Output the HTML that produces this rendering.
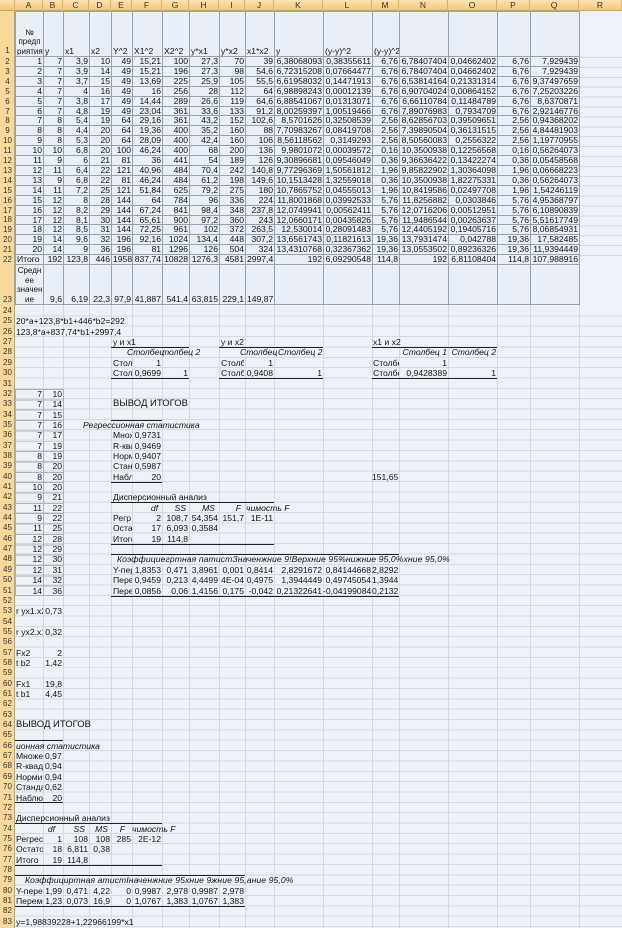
<!DOCTYPE html>
<html><head><meta charset="utf-8">
<style>
*{margin:0;padding:0;box-sizing:border-box}
body{width:622px;height:928px;overflow:hidden;background:#eef1f8;font-family:"Liberation Sans","Noto Sans CJK SC",sans-serif;font-size:8.6px;color:#111;position:relative}
.g{position:absolute;left:15px;top:306px;width:607px;height:622px;background:repeating-linear-gradient(to bottom,#eef1f8 0,#eef1f8 9.35px,#d3d9e6 9.35px,#d3d9e6 10.35px)}
.v{position:absolute;top:11px;width:1px;height:917px;background:#d3d9e6}
.rh{position:absolute;left:0;top:0;width:15px;height:928px;background:#f9d89c;border-right:1px solid #c9a25a}
.ch{position:absolute;left:0;top:0;width:622px;height:11px;background:linear-gradient(#fbe3b4,#f3c877);border-bottom:1px solid #c9a25a}
.ch span{position:absolute;top:0;line-height:11px;text-align:center;font-size:8.5px;color:#333;border-right:1px solid #d8b56f;height:11px}
.n{position:absolute;left:0;width:15px;text-align:center;font-size:8px;line-height:10px;color:#333}
table{position:absolute;left:15px;top:11px;width:564px;border-collapse:collapse;table-layout:fixed;background:#eaeef6}
td{border:1px solid #95a0b3;height:8.9px;line-height:8.9px;padding:0 1px;text-align:right;overflow:hidden;white-space:nowrap;font-size:8.6px;vertical-align:bottom}
tr.h td{height:45px;text-align:left;line-height:9.5px}
tr.m td{height:40px;line-height:9.5px}
.t,.r{position:absolute;white-space:nowrap;line-height:10px;height:10px}
.r{text-align:right}
.i{font-style:italic}
.l{position:absolute;height:1px;background:#222}
</style></head><body>
<div class="g"></div>
<div style="position:absolute;left:579px;top:57px;width:43px;height:208px;background:repeating-linear-gradient(to bottom,#d3d9e6 0,#d3d9e6 1px,#eef1f8 1px,#eef1f8 9.9px)"></div>
<div class="v" style="left:43px"></div><div class="v" style="left:63px"></div><div class="v" style="left:89px"></div><div class="v" style="left:111px"></div><div class="v" style="left:132px"></div><div class="v" style="left:162px"></div><div class="v" style="left:189px"></div><div class="v" style="left:219px"></div><div class="v" style="left:245px"></div><div class="v" style="left:274px"></div><div class="v" style="left:323px"></div><div class="v" style="left:372px"></div><div class="v" style="left:399px"></div><div class="v" style="left:448px"></div><div class="v" style="left:497px"></div><div class="v" style="left:530px"></div><div class="v" style="left:579px"></div>

<table>
<colgroup><col style="width:28px"><col style="width:20px"><col style="width:26px"><col style="width:22px"><col style="width:21px"><col style="width:30px"><col style="width:27px"><col style="width:30px"><col style="width:26px"><col style="width:29px"><col style="width:49px"><col style="width:49px"><col style="width:27px"><col style="width:49px"><col style="width:49px"><col style="width:33px"><col style="width:49px"></colgroup>
<tr class="h"><td style="text-align:center;font-size:8px;white-space:normal">№ предп риятия</td><td>y</td><td>x1</td><td>x2</td><td>Y^2</td><td>X1^2</td><td>X2^2</td><td>y*x1</td><td>y*x2</td><td>x1*x2</td><td>y</td><td>(y-y)^2</td><td>(y-y)^2</td><td></td><td></td><td></td><td></td></tr>
<tr><td>1</td><td>7</td><td>3,9</td><td>10</td><td>49</td><td>15,21</td><td>100</td><td>27,3</td><td>70</td><td>39</td><td>6,38068093</td><td>0,38355611</td><td>6,76</td><td>6,78407404</td><td>0,04662402</td><td>6,76</td><td>7,929439</td></tr>
<tr><td>2</td><td>7</td><td>3,9</td><td>14</td><td>49</td><td>15,21</td><td>196</td><td>27,3</td><td>98</td><td>54,6</td><td>6,72315208</td><td>0,07664477</td><td>6,76</td><td>6,78407404</td><td>0,04662402</td><td>6,76</td><td>7,929439</td></tr>
<tr><td>3</td><td>7</td><td>3,7</td><td>15</td><td>49</td><td>13,69</td><td>225</td><td>25,9</td><td>105</td><td>55,5</td><td>6,61958032</td><td>0,14471913</td><td>6,76</td><td>6,53814164</td><td>0,21331314</td><td>6,76</td><td>9,37497659</td></tr>
<tr><td>4</td><td>7</td><td>4</td><td>16</td><td>49</td><td>16</td><td>256</td><td>28</td><td>112</td><td>64</td><td>6,98898243</td><td>0,00012139</td><td>6,76</td><td>6,90704024</td><td>0,00864152</td><td>6,76</td><td>7,25203226</td></tr>
<tr><td>5</td><td>7</td><td>3,8</td><td>17</td><td>49</td><td>14,44</td><td>289</td><td>26,6</td><td>119</td><td>64,6</td><td>6,88541067</td><td>0,01313071</td><td>6,76</td><td>6,66110784</td><td>0,11484789</td><td>6,76</td><td>8,6370871</td></tr>
<tr><td>6</td><td>7</td><td>4,8</td><td>19</td><td>49</td><td>23,04</td><td>361</td><td>33,6</td><td>133</td><td>91,2</td><td>8,00259397</td><td>1,00519466</td><td>6,76</td><td>7,89076983</td><td>0,7934709</td><td>6,76</td><td>2,92146776</td></tr>
<tr><td>7</td><td>8</td><td>5,4</td><td>19</td><td>64</td><td>29,16</td><td>361</td><td>43,2</td><td>152</td><td>102,6</td><td>8,5701626</td><td>0,32508539</td><td>2,56</td><td>8,62856703</td><td>0,39509651</td><td>2,56</td><td>0,94368202</td></tr>
<tr><td>8</td><td>8</td><td>4,4</td><td>20</td><td>64</td><td>19,36</td><td>400</td><td>35,2</td><td>160</td><td>88</td><td>7,70983267</td><td>0,08419708</td><td>2,56</td><td>7,39890504</td><td>0,36131515</td><td>2,56</td><td>4,84481903</td></tr>
<tr><td>9</td><td>8</td><td>5,3</td><td>20</td><td>64</td><td>28,09</td><td>400</td><td>42,4</td><td>160</td><td>106</td><td>8,56118562</td><td>0,3149293</td><td>2,56</td><td>8,50560083</td><td>0,2556322</td><td>2,56</td><td>1,19770955</td></tr>
<tr><td>10</td><td>10</td><td>6,8</td><td>20</td><td>100</td><td>46,24</td><td>400</td><td>68</td><td>200</td><td>136</td><td>9,9801072</td><td>0,00039572</td><td>0,16</td><td>10,3500938</td><td>0,12256568</td><td>0,16</td><td>0,56264073</td></tr>
<tr><td>11</td><td>9</td><td>6</td><td>21</td><td>81</td><td>36</td><td>441</td><td>54</td><td>189</td><td>126</td><td>9,30896681</td><td>0,09546049</td><td>0,36</td><td>9,36636422</td><td>0,13422274</td><td>0,36</td><td>0,05458568</td></tr>
<tr><td>12</td><td>11</td><td>6,4</td><td>22</td><td>121</td><td>40,96</td><td>484</td><td>70,4</td><td>242</td><td>140,8</td><td>9,77296369</td><td>1,50561812</td><td>1,96</td><td>9,85822902</td><td>1,30364098</td><td>1,96</td><td>0,06668223</td></tr>
<tr><td>13</td><td>9</td><td>6,8</td><td>22</td><td>81</td><td>46,24</td><td>484</td><td>61,2</td><td>198</td><td>149,6</td><td>10,1513428</td><td>1,32559018</td><td>0,36</td><td>10,3500938</td><td>1,82275331</td><td>0,36</td><td>0,56264073</td></tr>
<tr><td>14</td><td>11</td><td>7,2</td><td>25</td><td>121</td><td>51,84</td><td>625</td><td>79,2</td><td>275</td><td>180</td><td>10,7865752</td><td>0,04555013</td><td>1,96</td><td>10,8419586</td><td>0,02497708</td><td>1,96</td><td>1,54246119</td></tr>
<tr><td>15</td><td>12</td><td>8</td><td>28</td><td>144</td><td>64</td><td>784</td><td>96</td><td>336</td><td>224</td><td>11,8001868</td><td>0,03992533</td><td>5,76</td><td>11,8256882</td><td>0,0303846</td><td>5,76</td><td>4,95368797</td></tr>
<tr><td>16</td><td>12</td><td>8,2</td><td>29</td><td>144</td><td>67,24</td><td>841</td><td>98,4</td><td>348</td><td>237,8</td><td>12,0749941</td><td>0,00562411</td><td>5,76</td><td>12,0716206</td><td>0,00512951</td><td>5,76</td><td>6,10890839</td></tr>
<tr><td>17</td><td>12</td><td>8,1</td><td>30</td><td>144</td><td>65,61</td><td>900</td><td>97,2</td><td>360</td><td>243</td><td>12,0660171</td><td>0,00435826</td><td>5,76</td><td>11,9486544</td><td>0,00263637</td><td>5,76</td><td>5,51617749</td></tr>
<tr><td>18</td><td>12</td><td>8,5</td><td>31</td><td>144</td><td>72,25</td><td>961</td><td>102</td><td>372</td><td>263,5</td><td>12,530014</td><td>0,28091483</td><td>5,76</td><td>12,4405192</td><td>0,19405716</td><td>5,76</td><td>8,06854931</td></tr>
<tr><td>19</td><td>14</td><td>9,6</td><td>32</td><td>196</td><td>92,16</td><td>1024</td><td>134,4</td><td>448</td><td>307,2</td><td>13,6561743</td><td>0,11821613</td><td>19,36</td><td>13,7931474</td><td>0,042788</td><td>19,36</td><td>17,582485</td></tr>
<tr><td>20</td><td>14</td><td>9</td><td>36</td><td>196</td><td>81</td><td>1296</td><td>126</td><td>504</td><td>324</td><td>13,4310768</td><td>0,32367362</td><td>19,36</td><td>13,0553502</td><td>0,89236326</td><td>19,36</td><td>11,9394449</td></tr>
<tr><td style="text-align:left">Итого</td><td>192</td><td>123,8</td><td>446</td><td>1958</td><td>837,74</td><td>10828</td><td>1276,3</td><td>4581</td><td>2997,4</td><td>192</td><td>6,09290548</td><td>114,8</td><td>192</td><td>6,81108404</td><td>114,8</td><td>107,988916</td></tr>
<tr class="m"><td style="text-align:center;white-space:normal;font-size:8px">Средн ее значен ие</td><td>9,6</td><td>6,19</td><td>22,3</td><td>97,9</td><td>41,887</td><td>541,4</td><td>63,815</td><td>229,1</td><td>149,87</td><td></td><td></td><td></td><td></td><td></td><td></td><td></td></tr>
</table>

<div style="position:absolute;left:15px;top:388.8px;width:49px;height:207px;border:1px solid #a8b1c2;background:repeating-linear-gradient(to bottom,transparent 0,transparent 9.35px,#a8b1c2 9.35px,#a8b1c2 10.35px)"></div>
<div style="position:absolute;left:43px;top:388.8px;width:1px;height:207px;background:#a8b1c2"></div>

<div class="rh"></div>
<div class="ch">
<span style="left:0;width:15px"></span><span style="left:15px;width:28px">A</span><span style="left:43px;width:20px">B</span><span style="left:63px;width:26px">C</span><span style="left:89px;width:22px">D</span><span style="left:111px;width:21px">E</span><span style="left:132px;width:30px">F</span><span style="left:162px;width:27px">G</span><span style="left:189px;width:30px">H</span><span style="left:219px;width:26px">I</span><span style="left:245px;width:29px">J</span><span style="left:274px;width:49px">K</span><span style="left:323px;width:49px">L</span><span style="left:372px;width:27px">M</span><span style="left:399px;width:49px">N</span><span style="left:448px;width:49px">O</span><span style="left:497px;width:33px">P</span><span style="left:530px;width:49px">Q</span><span style="left:579px;width:43px">R</span>
</div>

<div class="n" style="top:46px">1</div><div class="n" style="top:57px">2</div><div class="n" style="top:66.9px">3</div><div class="n" style="top:76.8px">4</div><div class="n" style="top:86.7px">5</div><div class="n" style="top:96.6px">6</div><div class="n" style="top:106.5px">7</div><div class="n" style="top:116.4px">8</div><div class="n" style="top:126.3px">9</div><div class="n" style="top:136.2px">10</div><div class="n" style="top:146.1px">11</div><div class="n" style="top:156px">12</div><div class="n" style="top:165.9px">13</div><div class="n" style="top:175.8px">14</div><div class="n" style="top:185.7px">15</div><div class="n" style="top:195.6px">16</div><div class="n" style="top:205.5px">17</div><div class="n" style="top:215.4px">18</div><div class="n" style="top:225.3px">19</div><div class="n" style="top:235.2px">20</div><div class="n" style="top:245.1px">21</div><div class="n" style="top:255px">22</div><div class="n" style="top:295px">23</div>
<div class="n" style="top:306px">24</div><div class="n" style="top:316.4px">25</div><div class="n" style="top:326.7px">26</div><div class="n" style="top:337.1px">27</div><div class="n" style="top:347.4px">28</div><div class="n" style="top:357.8px">29</div><div class="n" style="top:368.1px">30</div><div class="n" style="top:378.5px">31</div><div class="n" style="top:388.8px">32</div><div class="n" style="top:399.2px">33</div><div class="n" style="top:409.5px">34</div><div class="n" style="top:419.9px">35</div><div class="n" style="top:430.2px">36</div><div class="n" style="top:440.6px">37</div><div class="n" style="top:450.9px">38</div><div class="n" style="top:461.3px">39</div><div class="n" style="top:471.6px">40</div><div class="n" style="top:482px">41</div><div class="n" style="top:492.3px">42</div><div class="n" style="top:502.7px">43</div><div class="n" style="top:513px">44</div><div class="n" style="top:523.4px">45</div><div class="n" style="top:533.7px">46</div><div class="n" style="top:544.1px">47</div><div class="n" style="top:554.4px">48</div><div class="n" style="top:564.8px">49</div><div class="n" style="top:575.1px">50</div><div class="n" style="top:585.5px">51</div><div class="n" style="top:595.8px">52</div><div class="n" style="top:606.2px">53</div><div class="n" style="top:616.5px">54</div><div class="n" style="top:626.9px">55</div><div class="n" style="top:637.2px">56</div><div class="n" style="top:647.6px">57</div><div class="n" style="top:657.9px">58</div><div class="n" style="top:668.3px">59</div><div class="n" style="top:678.6px">60</div><div class="n" style="top:689px">61</div><div class="n" style="top:699.3px">62</div><div class="n" style="top:709.7px">63</div><div class="n" style="top:720px">64</div><div class="n" style="top:730.4px">65</div><div class="n" style="top:740.7px">66</div><div class="n" style="top:751.1px">67</div><div class="n" style="top:761.4px">68</div><div class="n" style="top:771.8px">69</div><div class="n" style="top:782.1px">70</div><div class="n" style="top:792.5px">71</div><div class="n" style="top:802.8px">72</div><div class="n" style="top:813.2px">73</div><div class="n" style="top:823.5px">74</div><div class="n" style="top:833.9px">75</div><div class="n" style="top:844.2px">76</div><div class="n" style="top:854.6px">77</div><div class="n" style="top:864.9px">78</div><div class="n" style="top:875.3px">79</div><div class="n" style="top:885.6px">80</div><div class="n" style="top:896px">81</div><div class="n" style="top:906.3px">82</div><div class="n" style="top:916.7px">83</div>

<div class="t" style="left:16px;top:316.4px">20*a+123,8*b1+446*b2=292</div>
<div class="t" style="left:16px;top:326.7px">123,8*a+837,74*b1+2997,4</div>

<div class="t" style="left:113px;top:337.1px">у и х1</div>
<div class="l" style="left:111px;top:347px;width:78px"></div>
<div class="t i" style="left:127px;top:347.4px">Столбец</div><div class="t i" style="left:162px;top:347.4px">толбец 2</div>
<div class="t" style="left:113px;top:357.8px">Стол</div><div class="r" style="left:132px;width:29px;top:357.8px">1</div>
<div class="t" style="left:113px;top:368.1px">Стол</div><div class="r" style="left:132px;width:29px;top:368.1px">0,9699</div><div class="r" style="left:162px;width:26px;top:368.1px">1</div>
<div class="l" style="left:111px;top:378px;width:78px"></div>

<div class="t" style="left:221px;top:337.1px">у и х2</div>
<div class="l" style="left:219px;top:347px;width:104px"></div>
<div class="t i" style="left:240px;top:347.4px">Столбец</div><div class="t i" style="left:278px;top:347.4px">Столбец 2</div>
<div class="t" style="left:221px;top:357.8px;width:23px;overflow:hidden">Столбе</div><div class="r" style="left:245px;width:28px;top:357.8px">1</div>
<div class="t" style="left:221px;top:368.1px;width:23px;overflow:hidden">Столбе</div><div class="r" style="left:245px;width:28px;top:368.1px">0,9408</div><div class="r" style="left:274px;width:48px;top:368.1px">1</div>
<div class="l" style="left:219px;top:378px;width:104px"></div>

<div class="t" style="left:373px;top:337.1px">x1 и x2</div>
<div class="l" style="left:372px;top:347px;width:125px"></div>
<div class="r i" style="left:399px;width:48px;top:347.4px">Столбец 1</div><div class="r i" style="left:448px;width:48px;top:347.4px">Столбец 2</div>
<div class="t" style="left:373px;top:357.8px;width:26px;overflow:hidden">Столбец</div><div class="r" style="left:399px;width:48px;top:357.8px">1</div>
<div class="t" style="left:373px;top:368.1px;width:26px;overflow:hidden">Столбец</div><div class="r" style="left:399px;width:48px;top:368.1px">0,9428389</div><div class="r" style="left:448px;width:48px;top:368.1px">1</div>
<div class="l" style="left:372px;top:378px;width:125px"></div>

<div class="r" style="left:15px;width:27px;top:388.8px">7</div><div class="r" style="left:43px;width:19px;top:388.8px">10</div>
<div class="r" style="left:15px;width:27px;top:399.2px">7</div><div class="r" style="left:43px;width:19px;top:399.2px">14</div>
<div class="r" style="left:15px;width:27px;top:409.5px">7</div><div class="r" style="left:43px;width:19px;top:409.5px">15</div>
<div class="r" style="left:15px;width:27px;top:419.9px">7</div><div class="r" style="left:43px;width:19px;top:419.9px">16</div>
<div class="r" style="left:15px;width:27px;top:430.2px">7</div><div class="r" style="left:43px;width:19px;top:430.2px">17</div>
<div class="r" style="left:15px;width:27px;top:440.6px">7</div><div class="r" style="left:43px;width:19px;top:440.6px">19</div>
<div class="r" style="left:15px;width:27px;top:450.9px">8</div><div class="r" style="left:43px;width:19px;top:450.9px">19</div>
<div class="r" style="left:15px;width:27px;top:461.3px">8</div><div class="r" style="left:43px;width:19px;top:461.3px">20</div>
<div class="r" style="left:15px;width:27px;top:471.6px">8</div><div class="r" style="left:43px;width:19px;top:471.6px">20</div>
<div class="r" style="left:15px;width:27px;top:482px">10</div><div class="r" style="left:43px;width:19px;top:482px">20</div>
<div class="r" style="left:15px;width:27px;top:492.3px">9</div><div class="r" style="left:43px;width:19px;top:492.3px">21</div>
<div class="r" style="left:15px;width:27px;top:502.7px">11</div><div class="r" style="left:43px;width:19px;top:502.7px">22</div>
<div class="r" style="left:15px;width:27px;top:513px">9</div><div class="r" style="left:43px;width:19px;top:513px">22</div>
<div class="r" style="left:15px;width:27px;top:523.4px">11</div><div class="r" style="left:43px;width:19px;top:523.4px">25</div>
<div class="r" style="left:15px;width:27px;top:533.7px">12</div><div class="r" style="left:43px;width:19px;top:533.7px">28</div>
<div class="r" style="left:15px;width:27px;top:544.1px">12</div><div class="r" style="left:43px;width:19px;top:544.1px">29</div>
<div class="r" style="left:15px;width:27px;top:554.4px">12</div><div class="r" style="left:43px;width:19px;top:554.4px">30</div>
<div class="r" style="left:15px;width:27px;top:564.8px">12</div><div class="r" style="left:43px;width:19px;top:564.8px">31</div>
<div class="r" style="left:15px;width:27px;top:575.1px">14</div><div class="r" style="left:43px;width:19px;top:575.1px">32</div>
<div class="r" style="left:15px;width:27px;top:585.5px">14</div><div class="r" style="left:43px;width:19px;top:585.5px">36</div>

<div class="t" style="left:113px;top:399.2px;font-size:9.5px">ВЫВОД ИТОГОВ</div>
<div class="l" style="left:111px;top:419.5px;width:51px"></div>
<div class="t i" style="left:83px;top:419.9px">Регрессионная статистика</div>
<div class="t" style="left:113px;top:430.2px;width:19px;overflow:hidden">Множ</div><div class="r" style="left:132px;width:29px;top:430.2px">0,9731</div>
<div class="t" style="left:113px;top:440.6px;width:19px;overflow:hidden">R-ква</div><div class="r" style="left:132px;width:29px;top:440.6px">0,9469</div>
<div class="t" style="left:113px;top:450.9px;width:19px;overflow:hidden">Норм</div><div class="r" style="left:132px;width:29px;top:450.9px">0,9407</div>
<div class="t" style="left:113px;top:461.3px;width:19px;overflow:hidden">Станд</div><div class="r" style="left:132px;width:29px;top:461.3px">0,5987</div>
<div class="t" style="left:113px;top:471.6px;width:19px;overflow:hidden">Набл</div><div class="r" style="left:132px;width:29px;top:471.6px">20</div>
<div class="l" style="left:111px;top:481.5px;width:51px"></div>
<div class="r" style="left:372px;width:26px;top:471.6px">151,65</div>

<div class="t" style="left:113px;top:492.3px">Дисперсионный анализ</div>
<div class="l" style="left:111px;top:502.3px;width:163px"></div>
<div class="r i" style="left:132px;width:26px;top:502.7px">df</div><div class="r i" style="left:162px;width:24px;top:502.7px">SS</div><div class="r i" style="left:189px;width:26px;top:502.7px">MS</div><div class="r i" style="left:219px;width:22px;top:502.7px">F</div><div class="t i" style="left:246px;top:502.7px">чимость F</div>
<div class="t" style="left:113px;top:513px;width:19px;overflow:hidden">Регр</div><div class="r" style="left:132px;width:29px;top:513px">2</div><div class="r" style="left:162px;width:26px;top:513px">108,7</div><div class="r" style="left:189px;width:29px;top:513px">54,354</div><div class="r" style="left:219px;width:25px;top:513px">151,7</div><div class="r" style="left:245px;width:28px;top:513px">1E-11</div>
<div class="t" style="left:113px;top:523.4px;width:19px;overflow:hidden">Оста</div><div class="r" style="left:132px;width:29px;top:523.4px">17</div><div class="r" style="left:162px;width:26px;top:523.4px">6,093</div><div class="r" style="left:189px;width:29px;top:523.4px">0,3584</div>
<div class="t" style="left:113px;top:533.7px;width:19px;overflow:hidden">Итого</div><div class="r" style="left:132px;width:29px;top:533.7px">19</div><div class="r" style="left:162px;width:26px;top:533.7px">114,8</div>
<div class="l" style="left:111px;top:543.8px;width:163px"></div>

<div class="l" style="left:111px;top:554px;width:288px"></div>
<div class="t i" style="left:117px;top:554.4px;letter-spacing:0.1px">Коэффициегртная патистЗначенжние 9!Верхние 95%нижние 95,0%хние 95,0%</div>
<div class="t" style="left:113px;top:564.8px;width:19px;overflow:hidden">Y-пер</div><div class="r" style="left:132px;width:29px;top:564.8px">1,8353</div><div class="r" style="left:162px;width:26px;top:564.8px">0,471</div><div class="r" style="left:189px;width:29px;top:564.8px">3,8961</div><div class="r" style="left:219px;width:25px;top:564.8px">0,001</div><div class="r" style="left:245px;width:28px;top:564.8px">0,8414</div><div class="r" style="left:274px;width:48px;top:564.8px">2,8291672</div><div class="r" style="left:323px;width:48px;top:564.8px">0,84144668</div><div class="r" style="left:372px;width:26px;top:564.8px">2,8292</div>
<div class="t" style="left:113px;top:575.1px;width:19px;overflow:hidden">Пере</div><div class="r" style="left:132px;width:29px;top:575.1px">0,9459</div><div class="r" style="left:162px;width:26px;top:575.1px">0,213</div><div class="r" style="left:189px;width:29px;top:575.1px">4,4499</div><div class="r" style="left:219px;width:25px;top:575.1px">4E-04</div><div class="r" style="left:245px;width:28px;top:575.1px">0,4975</div><div class="r" style="left:274px;width:48px;top:575.1px">1,3944449</div><div class="r" style="left:323px;width:48px;top:575.1px">0,49745054</div><div class="r" style="left:372px;width:26px;top:575.1px">1,3944</div>
<div class="t" style="left:113px;top:585.5px;width:19px;overflow:hidden">Пере</div><div class="r" style="left:132px;width:29px;top:585.5px">0,0856</div><div class="r" style="left:162px;width:26px;top:585.5px">0,06</div><div class="r" style="left:189px;width:29px;top:585.5px">1,4156</div><div class="r" style="left:219px;width:25px;top:585.5px">0,175</div><div class="r" style="left:245px;width:28px;top:585.5px">-0,042</div><div class="r" style="left:274px;width:48px;top:585.5px">0,21322641</div><div class="r" style="left:323px;width:48px;top:585.5px">-0,04199084</div><div class="r" style="left:372px;width:26px;top:585.5px">0,2132</div>
<div class="l" style="left:111px;top:595.5px;width:288px"></div>

<div class="t" style="left:16px;top:606.2px;width:27px;overflow:hidden">r yx1.x2</div><div class="r" style="left:43px;width:19px;top:606.2px">0,73</div>
<div class="t" style="left:16px;top:626.9px;width:27px;overflow:hidden">r yx2.x1</div><div class="r" style="left:43px;width:19px;top:626.9px">0,32</div>
<div class="t" style="left:16px;top:647.6px">Fx2</div><div class="r" style="left:43px;width:19px;top:647.6px">2</div>
<div class="t" style="left:16px;top:657.9px">t b2</div><div class="r" style="left:43px;width:19px;top:657.9px">1,42</div>
<div class="t" style="left:16px;top:678.6px">Fx1</div><div class="r" style="left:43px;width:19px;top:678.6px">19,8</div>
<div class="t" style="left:16px;top:689px">t b1</div><div class="r" style="left:43px;width:19px;top:689px">4,45</div>

<div class="t" style="left:16px;top:720px;font-size:9.5px">ВЫВОД ИТОГОВ</div>
<div class="l" style="left:15px;top:740.3px;width:48px"></div>
<div class="t i" style="left:16px;top:740.7px">ионная статистика</div>
<div class="t" style="left:16px;top:751.1px;width:27px;overflow:hidden">Множе</div><div class="t" style="left:45px;top:751.1px">0,97</div>
<div class="t" style="left:16px;top:761.4px;width:27px;overflow:hidden">R-квад</div><div class="t" style="left:45px;top:761.4px">0,94</div>
<div class="t" style="left:16px;top:771.8px;width:27px;overflow:hidden">Норми</div><div class="t" style="left:45px;top:771.8px">0,94</div>
<div class="t" style="left:16px;top:782.1px;width:27px;overflow:hidden">Станда</div><div class="t" style="left:45px;top:782.1px">0,62</div>
<div class="t" style="left:16px;top:792.5px;width:27px;overflow:hidden">Наблю</div><div class="r" style="left:43px;width:19px;top:792.5px">20</div>
<div class="l" style="left:15px;top:802.4px;width:48px"></div>

<div class="t" style="left:16px;top:813.2px">Дисперсионный анализ</div>
<div class="l" style="left:15px;top:823.2px;width:147px"></div>
<div class="r i" style="left:43px;width:12px;top:823.5px">df</div><div class="r i" style="left:63px;width:22px;top:823.5px">SS</div><div class="r i" style="left:89px;width:19px;top:823.5px">MS</div><div class="r i" style="left:111px;width:14px;top:823.5px">F</div><div class="t i" style="left:132px;top:823.5px">чимость F</div>
<div class="t" style="left:16px;top:833.9px;width:27px;overflow:hidden">Регрес</div><div class="r" style="left:43px;width:19px;top:833.9px">1</div><div class="r" style="left:63px;width:25px;top:833.9px">108</div><div class="r" style="left:89px;width:21px;top:833.9px">108</div><div class="r" style="left:111px;width:20px;top:833.9px">285</div><div class="r" style="left:132px;width:29px;top:833.9px">2E-12</div>
<div class="t" style="left:16px;top:844.2px;width:27px;overflow:hidden">Остатоі</div><div class="r" style="left:43px;width:19px;top:844.2px">18</div><div class="r" style="left:63px;width:25px;top:844.2px">6,811</div><div class="r" style="left:89px;width:21px;top:844.2px">0,38</div>
<div class="t" style="left:16px;top:854.6px">Итого</div><div class="r" style="left:43px;width:19px;top:854.6px">19</div><div class="r" style="left:63px;width:25px;top:854.6px">114,8</div>
<div class="l" style="left:15px;top:864.6px;width:147px"></div>

<div class="l" style="left:15px;top:875px;width:230px"></div>
<div class="t i" style="left:25px;top:875.3px;letter-spacing:0.1px">Коэффициртная атистІначенжние 95хние 9жние 95,ание 95,0%</div>
<div class="t" style="left:16px;top:885.6px;width:27px;overflow:hidden">Y-пере</div><div class="r" style="left:43px;width:19px;top:885.6px">1,99</div><div class="r" style="left:63px;width:25px;top:885.6px">0,471</div><div class="r" style="left:89px;width:21px;top:885.6px">4,22</div><div class="r" style="left:111px;width:20px;top:885.6px">0</div><div class="r" style="left:132px;width:29px;top:885.6px">0,9987</div><div class="r" style="left:162px;width:26px;top:885.6px">2,978</div><div class="r" style="left:189px;width:29px;top:885.6px">0,9987</div><div class="r" style="left:219px;width:25px;top:885.6px">2,978</div>
<div class="t" style="left:16px;top:896px;width:27px;overflow:hidden">Переме</div><div class="r" style="left:43px;width:19px;top:896px">1,23</div><div class="r" style="left:63px;width:25px;top:896px">0,073</div><div class="r" style="left:89px;width:21px;top:896px">16,9</div><div class="r" style="left:111px;width:20px;top:896px">0</div><div class="r" style="left:132px;width:29px;top:896px">1,0767</div><div class="r" style="left:162px;width:26px;top:896px">1,383</div><div class="r" style="left:189px;width:29px;top:896px">1,0767</div><div class="r" style="left:219px;width:25px;top:896px">1,383</div>
<div class="l" style="left:15px;top:906px;width:230px"></div>

<div class="t" style="left:16px;top:916.7px">y=1,98839228+1,22966199*x1</div>
</body></html>
